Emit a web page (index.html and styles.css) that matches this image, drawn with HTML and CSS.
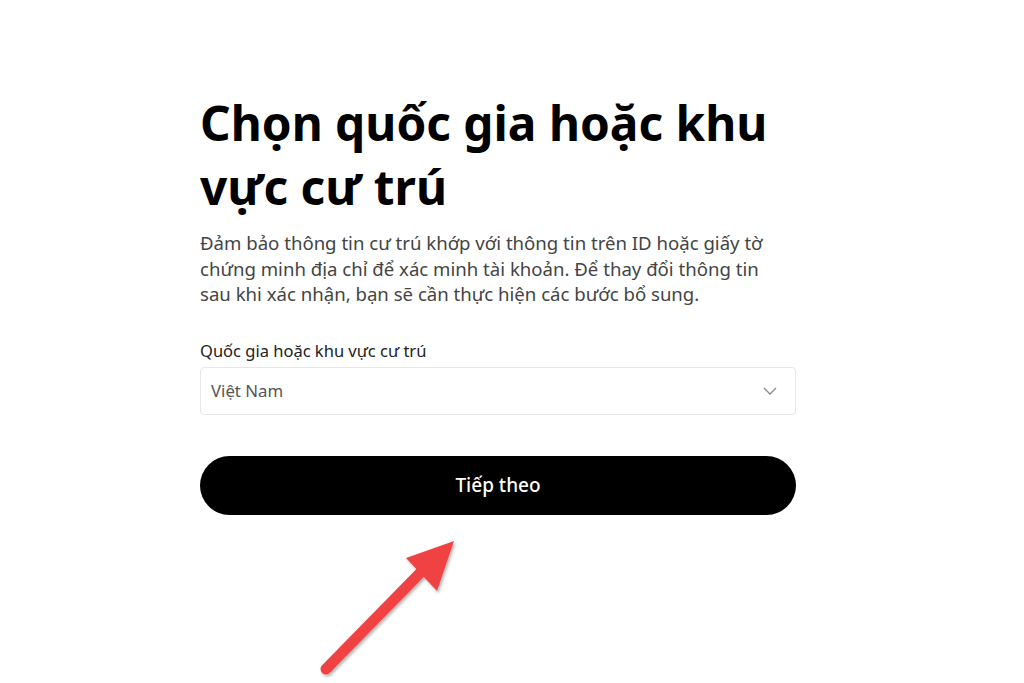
FILE: index.html
```html
<!DOCTYPE html>
<html lang="vi">
<head>
<meta charset="utf-8">
<link rel="stylesheet" href="styles.css">
</head>
<body>
<main class="page">
  <section class="form">
    <h1 class="title">Chọn quốc gia hoặc khu vực cư trú</h1>
    <p class="desc">Đảm bảo thông tin cư trú khớp với thông tin trên ID hoặc giấy tờ chứng minh địa chỉ để xác minh tài khoản. Để thay đổi thông tin sau khi xác nhận, bạn sẽ cần thực hiện các bước bổ sung.</p>
    <label class="label">Quốc gia hoặc khu vực cư trú</label>
    <div class="select">
      <span class="select-value">Việt Nam</span>
      <svg class="chevron" width="14" height="8" viewBox="0 0 14 8"><path d="M1 1l6 6 6-6" fill="none" stroke="#888" stroke-width="1.3"/></svg>
    </div>
    <button class="btn">Tiếp theo</button>
  </section>
  <svg class="arrow" width="1024" height="683" viewBox="0 0 1024 683">
    <defs>
      <filter id="sh" x="-20%" y="-20%" width="140%" height="140%">
        <feDropShadow dx="1.5" dy="2" stdDeviation="1.5" flood-color="#000" flood-opacity="0.3"/>
      </filter>
    </defs>
    <g filter="url(#sh)">
      <line x1="326" y1="669" x2="425" y2="568" stroke="#f04343" stroke-width="11" stroke-linecap="round"/>
      <polygon points="454,541 437,591 406,558" fill="#f04343"/>
    </g>
  </svg>
</main>
</body>
</html>
```

FILE: styles.css
```css
html, body {
  margin: 0;
  padding: 0;
  background: #fff;
}
.page {
  width: 1024px;
  height: 683px;
  overflow: hidden;
  font-family: "Noto Sans", "Open Sans", sans-serif;
}
.form {
  width: 596px;
  margin-left: 200px;
  padding-top: 91px;
  display: flex;
  flex-direction: column;
}
.title {
  margin: 0;
  font-size: 47.8px;
  line-height: 64px;
  font-weight: 700;
  color: #000;
}
.desc {
  margin: 11px 0 0;
  padding-right: 12px;
  font-size: 18.6px;
  line-height: 25.5px;
  color: #444;
}
.label {
  margin-top: 33px;
  font-size: 16.5px;
  line-height: 22px;
  color: #222;
}
.select {
  margin-top: 5px;
  height: 48px;
  border: 1px solid #e6e6e6;
  border-radius: 4px;
  box-sizing: border-box;
  display: flex;
  align-items: center;
  justify-content: space-between;
  padding: 0 18px 0 10px;
}
.select-value {
  font-size: 16.8px;
  color: #555;
}
.btn {
  margin-top: 41px;
  height: 59px;
  border: none;
  border-radius: 30px;
  background: #000;
  color: #fff;
  font-family: "Noto Sans", "Open Sans", sans-serif;
  font-size: 19px;
  font-weight: 500;
}
.arrow {
  position: absolute;
  left: 0;
  top: 0;
  pointer-events: none;
}
```
